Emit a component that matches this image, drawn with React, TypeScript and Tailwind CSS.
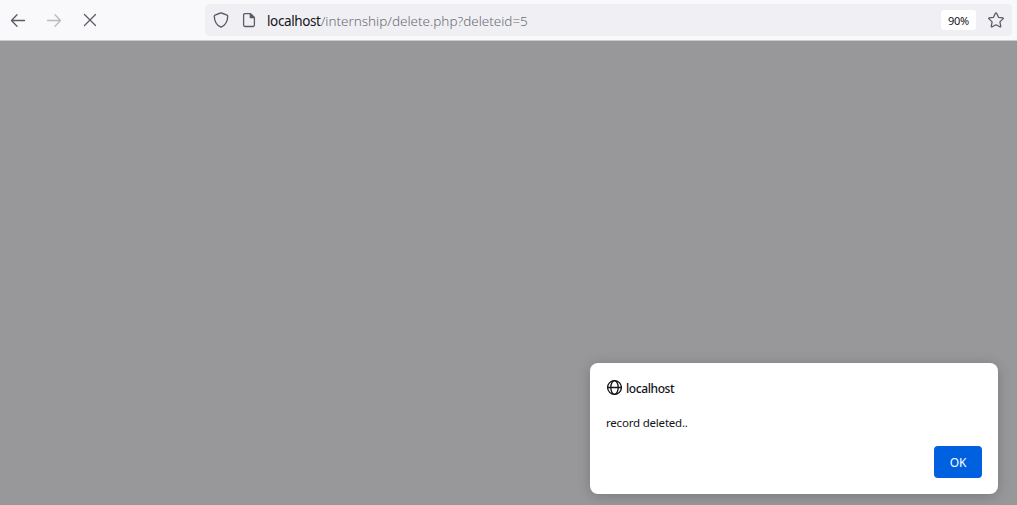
import React from "react";

const stroke = {
  fill: "none",
  stroke: "currentColor",
  strokeLinecap: "round" as const,
  strokeLinejoin: "round" as const,
};

function BackIcon() {
  return (
    <svg width="16" height="16" viewBox="0 0 16 16" {...stroke} strokeWidth="1.3">
      <path d="M14.500 8.500H1.700M7 2.800 1.500 8.500 7 14.200" />
    </svg>
  );
}

function ForwardIcon() {
  return (
    <svg width="16" height="16" viewBox="0 0 16 16" {...stroke} strokeWidth="1.3">
      <path d="M1.500 8.500h12.800M9 2.800l5.500 5.700L9 14.200" />
    </svg>
  );
}

function StopIcon() {
  return (
    <svg width="16" height="16" viewBox="0 0 16 16" {...stroke} strokeWidth="1.3">
      <path d="m2.500 2.500 11 11M13.500 2.500l-11 11" />
    </svg>
  );
}

function ShieldIcon() {
  return (
    <svg width="16" height="16" viewBox="0 0 16 16" {...stroke} strokeWidth="1.35">
      <path d="M7.500 1Q8 .7 8.500 1L14 3.100q.7.300.7 1.100C14.600 9.200 12.500 13.200 8 15.200 3.500 13.200 1.400 9.200 1.300 4.200Q1.300 3.400 2 3.100Z" />
    </svg>
  );
}

function PageIcon() {
  return (
    <svg width="16" height="16" viewBox="0 0 16 16" {...stroke} strokeWidth="1.300">
      <path d="M9.500 1.600H3.900Q2.600 1.600 2.600 2.900v10.200q0 1.400 1.300 1.400h8.200q1.300 0 1.300-1.400V5.500Z" />
      <path d="M9.300 1.800v3.800h3.900Z" fill="currentColor" />
    </svg>
  );
}

function StarIcon() {
  return (
    <svg width="16" height="16" viewBox="0 0 16 16" {...stroke} strokeWidth="1.300">
      <path d="M7.400 1.300q.6-1 1.200 0l1.900 4 4.200.6q1.100.2.300 1l-3.100 3 .8 4.300q.1 1.100-.9.600L8 12.700l-3.800 2.100q-1 .5-.9-.6l.8-4.300-3.100-3q-.8-.8.300-1l4.200-.6Z" />
    </svg>
  );
}

function GlobeIcon() {
  return (
    <svg width="16" height="16" viewBox="0 0 16 16" {...stroke} strokeWidth="1.3">
      <circle cx="8.500" cy="7.500" r="6.900" />
      <ellipse cx="8.500" cy="7.500" rx="3.700" ry="6.900" />
      <path d="M1.600 7.500h13.800" />
    </svg>
  );
}

function Toolbar() {
  return (
    <header className="flex h-[41px] shrink-0 items-start border-b border-[#cccccf] bg-[#f9f9fb] pt-1 pr-[5px] pl-[10px] text-[#5b5b66]">
      <nav className="flex h-8 w-[195px] shrink-0 items-center gap-5">
        <button aria-label="Back"><BackIcon /></button>
        <button aria-label="Forward" className="text-[#b9b9bf]"><ForwardIcon /></button>
        <button aria-label="Stop"><StopIcon /></button>
      </nav>
      <div className="flex h-8 flex-1 items-center rounded bg-[#f0f0f4] pr-2 pl-2">
        <ShieldIcon />
        <span className="ml-3"><PageIcon /></span>
        <span className="mt-[2px] ml-[10px] flex-1 text-[13.5px] leading-5 whitespace-nowrap text-[#6b6b73]">
          <span className="tracking-[-0.38px] text-[#15141a]">localhost</span>
          <span className="font-light tracking-[-0.02px]">/internship/delete.php?deleteid=5</span>
        </span>
        <span className="flex h-5 w-[35px] items-center justify-center rounded-[3px] bg-white pt-[2px] text-[11px] tracking-[-0.2px] text-[#15141a]">
          90%
        </span>
        <span className="ml-3"><StarIcon /></span>
      </div>
    </header>
  );
}

function AlertDialog() {
  return (
    <section
      role="alertdialog"
      className="flex h-[131px] w-[408px] flex-col rounded-lg bg-white px-4 pt-4 pb-4 text-[#15141a] shadow-[0_2px_14px_rgba(0,0,0,0.2)]"
    >
      <div className="flex h-[17px] items-center gap-1">
        <GlobeIcon />
        <h1 className="pt-[2px] text-[12px] font-medium tracking-[-0.4px]">localhost</h1>
      </div>
      <p className="mt-[18px] text-[11.5px] leading-[17px] tracking-[-0.2px]">record deleted..</p>
      <button className="mt-auto flex h-8 w-12 items-center justify-center self-end rounded bg-[#0061e0] pt-[2px] text-[12px] tracking-[-0.2px] text-white">
        OK
      </button>
    </section>
  );
}

export default function App() {
  return (
    <div className="flex h-[505px] w-[1017px] flex-col overflow-hidden font-['Noto_Sans','Open_Sans',sans-serif]">
      <Toolbar />
      <main className="flex flex-1 items-end justify-end bg-[#98989a] pr-[19px] pb-[11px]">
        <AlertDialog />
      </main>
    </div>
  );
}
